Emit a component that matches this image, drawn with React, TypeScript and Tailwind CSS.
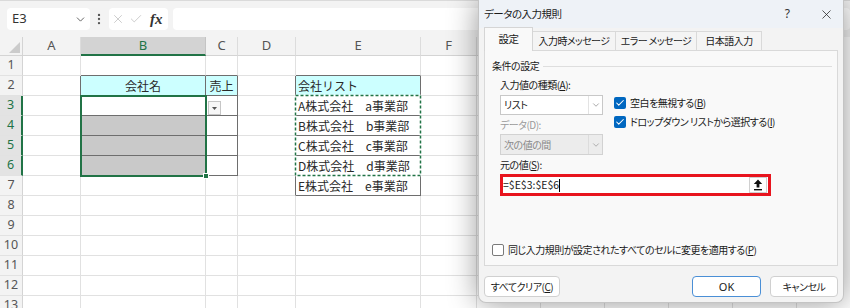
import { Check, ChevronDown, EllipsisVertical, X } from "lucide-react";
import clsx from "clsx";

const cols = [
  { key: "A", w: "w-[58px]" },
  { key: "B", w: "w-[125px]" },
  { key: "C", w: "w-[32px]" },
  { key: "D", w: "w-[58px]" },
  { key: "E", w: "w-[125px]" },
  { key: "F", w: "w-[56px]" },
  { key: "G", w: "w-[64px]" },
  { key: "H", w: "w-[64px]" },
  { key: "I", w: "w-[64px]" },
  { key: "J", w: "w-[64px]" },
  { key: "K", w: "w-[64px]" },
];

const rows = [1, 2, 3, 4, 5, 6, 7, 8, 9, 10, 11, 12, 13];
const selectedRows = [3, 4, 5, 6];

// cells with a thin black border
const boxed = new Set([
  "B2", "C2", "B3", "B4", "B5", "B6", "C3", "C4", "C5", "C6",
  "E2", "E3", "E4", "E5", "E6", "E7",
]);

const cells: Record<string, { text?: string; bg?: string; center?: boolean }> = {
  B2: { text: "会社名", bg: "bg-[#ccffff]", center: true },
  C2: { text: "売上", bg: "bg-[#ccffff]", center: true },
  B4: { bg: "bg-[#c9c9c9]" },
  B5: { bg: "bg-[#c9c9c9]" },
  B6: { bg: "bg-[#c9c9c9]" },
  E2: { text: "会社リスト", bg: "bg-[#ccffff]" },
  E3: { text: "A株式会社　a事業部" },
  E4: { text: "B株式会社　b事業部" },
  E5: { text: "C株式会社　c事業部" },
  E6: { text: "D株式会社　d事業部" },
  E7: { text: "E株式会社　e事業部" },
};

const nextCol = (k: string) => String.fromCharCode(k.charCodeAt(0) + 1);

function FormulaBar() {
  return (
    <div className="flex h-[37px] items-center border-t border-[#dadada] bg-[#f3f3f3] pl-[7px]">
      <div className="flex h-[22px] w-[83px] items-center rounded-[4px] bg-white pl-[5px] pr-[3px] font-['Noto_Sans'] text-[13px] text-[#333]">
        E3
        <ChevronDown className="ml-auto text-[#444]" size={13} strokeWidth={1.5} />
      </div>
      <EllipsisVertical className="ml-[2px] text-[#555]" size={14} strokeWidth={2} />
      <div className="ml-[3px] flex h-[22px] w-[59px] items-center rounded-[4px] bg-white">
        <X className="ml-[2px] text-[#b8b8b8]" size={14} strokeWidth={1.2} />
        <Check className="ml-[4px] text-[#b8b8b8]" size={14} strokeWidth={1.2} />
        <span className="ml-[7px] font-['Liberation_Serif'] text-[15px] font-semibold italic text-[#333]">fx</span>
      </div>
      <div className="ml-[5px] h-[22px] flex-1 rounded-[4px] bg-white" />
    </div>
  );
}

function Sheet() {
  return (
    <div className="flex flex-col">
      {/* column headings */}
      <div className="flex h-[19px]">
        <div className="relative w-[23px] shrink-0 border-r border-b border-[#d4d4d4] bg-[#f3f3f3]">
          <svg className="absolute bottom-[2px] right-[2px]" width="11" height="11">
            <polygon points="11,0 11,11 0,11" fill="#cbcbcb" />
          </svg>
        </div>
        {cols.map((c) => (
          <div
            key={c.key}
            className={clsx(
              "flex shrink-0 items-center justify-center border-r font-['Noto_Sans'] text-[13px]",
              c.w,
              c.key === "B"
                ? "border-b-2 border-r-[#c4c4c4] border-b-[#217346] bg-[#d3d3d3] text-[#217346]"
                : "border-b border-r-[#dcdcdc] border-b-[#d4d4d4] bg-[#f3f3f3] text-[#555]"
            )}
          >
            {c.key}
          </div>
        ))}
      </div>

      {rows.map((r) => {
        const sel = selectedRows.includes(r);
        return (
          <div key={r} className="flex h-[20px]">
            <div
              className={clsx(
                "flex w-[23px] shrink-0 items-center justify-center border-b border-b-[#e2e2e2] font-['Noto_Sans'] text-[12.5px]",
                sel
                  ? "border-r-2 border-r-[#217346] bg-[#e3e3e3] text-[#217346]"
                  : "border-r border-r-[#d4d4d4] bg-[#f3f3f3] text-[#555]"
              )}
            >
              {r}
            </div>
            {cols.map((c) => {
              const id = `${c.key}${r}`;
              const cell = cells[id];
              const darkB = boxed.has(id) || boxed.has(`${c.key}${r + 1}`);
              const darkR = boxed.has(id) || boxed.has(`${nextCol(c.key)}${r}`);
              return (
                <div
                  key={id}
                  className={clsx(
                    "flex shrink-0 items-center overflow-hidden whitespace-nowrap border-r border-b text-[12px] leading-none text-[#2a2a2a]",
                    c.w,
                    darkB ? "border-b-[#6e6e6e]" : "border-b-[#e1e1e1]",
                    darkR ? "border-r-[#6e6e6e]" : "border-r-[#e1e1e1]",
                    cell?.bg,
                    cell?.center ? "justify-center" : "pl-[2px]"
                  )}
                >
                  {cell?.text}
                  {id === "C3" && (
                    <div className="flex h-[14px] w-[13px] items-center justify-center self-end border border-[#c6c6c6] bg-[#f7f7f7]">
                      <svg width="5" height="3">
                        <polygon points="0,0 5,0 2.5,3" fill="#555" />
                      </svg>
                    </div>
                  )}
                </div>
              );
            })}
          </div>
        );
      })}
    </div>
  );
}

function Box({ checked }: { checked: boolean }) {
  return checked ? (
    <span className="flex h-[12px] w-[12px] shrink-0 items-center justify-center rounded-[2px] bg-[#0067c0]">
      <Check className="text-white" size={10} strokeWidth={2.5} />
    </span>
  ) : (
    <span className="h-[12px] w-[12px] shrink-0 rounded-[2px] border border-[#7a7a7a] bg-white" />
  );
}

function UpArrow() {
  return (
    <svg width="10" height="12" viewBox="0 0 10 12">
      <path d="M5 0.5 L9.2 5 H6.4 V8.6 H3.6 V5 H0.8 Z" fill="#111" />
      <rect x="1" y="10" width="8" height="1.4" fill="#111" />
    </svg>
  );
}

function Dialog() {
  return (
    <div className="absolute left-[478px] top-0 flex h-[303px] w-[366px] flex-col rounded-b-[8px] border border-t-0 border-[#c4c4c4] bg-[#f3f3f3] text-[10px] leading-none tracking-[-0.5px] text-[#1a1a1a] shadow-[0_0_30px_rgba(0,0,0,0.42)] [font-feature-settings:'palt']">
      <div className="flex h-[28px] shrink-0 items-center bg-[#eef2f7] pl-[5px] text-[10.5px]">
        <span>データの入力規則</span>
        <span className="ml-auto mr-[17px] flex w-[22px] justify-center font-['Noto_Sans'] text-[12px] text-[#333]">?</span>
        <span className="mr-[6px] flex w-[22px] justify-center text-[#222]">
          <X size={15} strokeWidth={1.2} />
        </span>
      </div>

      {/* tabs */}
      <div className="flex h-[22px] shrink-0 items-end whitespace-nowrap pl-[5px]">
        <div className="relative z-10 -mb-px flex h-[24px] w-[49px] items-center justify-center border border-b-0 border-[#d5d5d5] bg-[#f9f9f9] text-[10.5px]">
          設定
        </div>
        <div className="flex h-[19px] w-[83px] items-center justify-center border-t border-r border-[#d9d9d9] bg-[#f4f4f4] tracking-[-0.6px]">
          入力時メッセージ
        </div>
        <div className="flex h-[19px] w-[81px] items-center justify-center border-t border-r border-[#d9d9d9] bg-[#f4f4f4] tracking-[-0.6px]">
          エラー メッセージ
        </div>
        <div className="flex h-[19px] w-[65px] items-center justify-center border-t border-r border-[#d9d9d9] bg-[#f4f4f4]">
          日本語入力
        </div>
      </div>

      {/* panel */}
      <div className="ml-[5px] flex h-[216px] w-[354px] shrink-0 flex-col border border-[#d9d9d9] bg-[#f9f9f9]">
        <div className="mt-[7px] flex h-[16px] items-center pl-[7px]">
          <span>条件の設定</span>
          <div className="ml-[4px] mr-[5px] h-px flex-1 bg-[#dedede]" />
        </div>

        <div className="mt-[3px] flex pl-[15px]">
          <div className="flex w-[103px] flex-col">
            <div className="flex h-[16px] items-center whitespace-nowrap">
              入力値の種類(<u>A</u>):
            </div>
            <div className="mt-[2px] flex h-[20px] border border-[#c8c8c8] bg-white">
              <span className="flex flex-1 items-center pl-[3px]">リスト</span>
              <span className="flex w-[14px] items-center justify-center border-l border-[#e3e3e3] text-[#777]">
                <ChevronDown size={10} strokeWidth={1.5} />
              </span>
            </div>
            <div className="mt-[2px] flex h-[16px] items-center text-[#9a9a9a]">データ(D):</div>
            <div className="mt-[1px] flex h-[21px] border border-[#d2d2d2] bg-[#ececec] text-[#8a8a8a]">
              <span className="flex flex-1 items-center pl-[3px]">次の値の間</span>
              <span className="flex w-[14px] items-center justify-center border-l border-[#dcdcdc] text-[#888]">
                <ChevronDown size={10} strokeWidth={1.5} />
              </span>
            </div>
          </div>
          <div className="ml-[11px] flex flex-col pt-[19px]">
            <div className="flex h-[14px] items-center">
              <Box checked />
              <span className="ml-[4px] whitespace-nowrap">
                空白を無視する(<u>B</u>)
              </span>
            </div>
            <div className="mt-[5px] flex h-[14px] items-center">
              <Box checked />
              <span className="ml-[4px] whitespace-nowrap">
                ドロップダウン リストから選択する(<u>I</u>)
              </span>
            </div>
          </div>
        </div>

        <div className="mt-[2px] flex h-[16px] items-center pl-[15px]">
          元の値(<u>S</u>):
        </div>
        <div className="ml-[15px] mt-[1px] flex h-[22px] w-[271px] items-center border-[3px] border-[#e8141e] bg-white text-[10.5px] tracking-normal">
          <span className="whitespace-nowrap">=$E$3:$E$6</span>
          <span className="h-[13px] w-px bg-black" />
          <span className="ml-auto mr-[1px] flex h-[16px] w-[18px] items-center justify-center border border-[#d0d0d0] bg-white">
            <UpArrow />
          </span>
        </div>

        <div className="mt-[47px] flex h-[14px] items-center pl-[7px]">
          <Box checked={false} />
          <span className="ml-[4px] whitespace-nowrap">
            同じ入力規則が設定されたすべてのセルに変更を適用する(<u>P</u>)
          </span>
        </div>
      </div>

      {/* buttons */}
      <div className="mt-[10px] flex h-[21px] px-[5px]">
        <button className="flex w-[76px] items-center justify-center rounded-[4px] border border-[#d0d0d0] bg-white">
          すべてクリア(<u>C</u>)
        </button>
        <button className="ml-auto flex w-[69px] items-center justify-center rounded-[4px] border border-[#4a8fd6] bg-white font-['Noto_Sans'] text-[11px] tracking-normal">
          OK
        </button>
        <button className="ml-[9px] flex w-[68px] items-center justify-center rounded-[4px] border border-[#d0d0d0] bg-white">
          キャンセル
        </button>
      </div>
    </div>
  );
}

export default function App() {
  return (
    <div className="relative h-[308px] w-[850px] overflow-hidden bg-white font-['Noto_Sans_CJK_JP',sans-serif] text-[#222]">
      <FormulaBar />
      <Sheet />

      {/* active selection B3:B6 */}
      <div className="absolute left-[80px] top-[95px] h-[82px] w-[127px] border-2 border-[#217346]" />
      <div className="absolute left-[203px] top-[173px] h-[6px] w-[6px] border border-white bg-[#217346]" />

      {/* copy marquee E3:E6 */}
      <svg className="absolute left-[294px] top-[94px]" width="128" height="83">
        <rect x="1.5" y="1.5" width="125" height="80" fill="none" stroke="#ffffff" strokeWidth="1.5" />
        <rect x="1.5" y="1.5" width="125" height="80" fill="none" stroke="#217346" strokeWidth="1.5" strokeDasharray="3 2" />
      </svg>

      <Dialog />
    </div>
  );
}
